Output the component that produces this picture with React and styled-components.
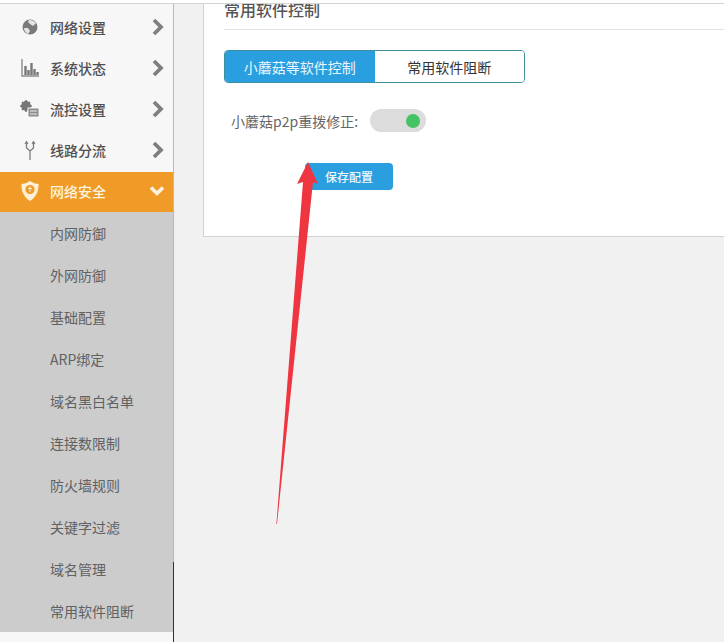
import React from "react";
import styled, { createGlobalStyle } from "styled-components";

const Global = createGlobalStyle`
  html, body { margin: 0; padding: 0; background: #f1f1f1; }
  * { box-sizing: border-box; }
  body { font-family: "Noto Sans CJK SC", "Noto Sans", sans-serif; }
`;

const Page = styled.div`
  position: relative;
  width: 724px;
  height: 642px;
  overflow: hidden;
  display: flex;
  flex-direction: column;
`;
const TopStrip = styled.div`
  height: 4px;
  flex: none;
  background: #fff;
  border-bottom: 1px solid #d4d4d4;
`;
const Body = styled.div`
  flex: 1;
  display: flex;
  min-height: 0;
`;
const Sidebar = styled.nav`
  width: 174px;
  flex: none;
  background: #f7f7f8;
  border-right: 1px solid #b9b9b9;
  position: relative;
  padding-top: 4px;
`;
const Item = styled.div`
  height: ${(p) => (p.$active ? "40px" : "41px")};
  display: flex;
  align-items: center;
  padding: 0 8px 3px 0;
  color: ${(p) => (p.$active ? "#fdf3df" : "#505050")};
  background: ${(p) => (p.$active ? "#f09a27" : "transparent")};
  font-size: 14px;
  font-weight: 500;
`;
const IconSlot = styled.span`
  width: 50px;
  flex: none;
  display: flex;
  justify-content: center;
  padding-left: 10px;
  svg { display: block; }
`;
const ItemLabel = styled.span`
  flex: 1;
`;
const SubList = styled.div`
  background: #cccccd;
`;
const SubItem = styled.div`
  height: 42px;
  display: flex;
  align-items: center;
  padding-left: 50px;
  font-size: 14px;
  color: #616161;
`;
const Edge = styled.div`
  position: absolute;
  right: -1px;
  top: 558px;
  bottom: 0;
  width: 1px;
  background: #333;
`;
const Main = styled.main`
  flex: 1;
  min-width: 0;
  padding-left: 29px;
`;
const Panel = styled.section`
  height: 233px;
  margin-top: 0;
  background: #fff;
  border-left: 1px solid #d2d2d2;
  border-bottom: 1px solid #d2d2d2;
  padding: 0 0 0 20px;
  overflow: hidden;
`;
const Title = styled.h2`
  margin: -9px 0 0;
  height: 35px;
  line-height: 28px;
  font-size: 16px;
  font-weight: 500;
  color: #555;
  border-bottom: 1px solid #e2e2e2;
`;
const Tabs = styled.div`
  margin-top: 20px;
  width: 301px;
  height: 33px;
  display: flex;
  border: 1px solid #3f8f9f;
  border-radius: 4px;
  overflow: hidden;
`;
const Tab = styled.div`
  width: 50%;
  display: flex;
  align-items: center;
  justify-content: center;
  font-size: 14px;
  color: ${(p) => (p.$on ? "#e9f6fd" : "#333")};
  background: ${(p) => (p.$on ? "#2a9fe0" : "#fff")};
`;
const Row = styled.div`
  margin-top: 26px;
  padding-left: 7px;
  display: flex;
  align-items: center;
  gap: 12px;
`;
const RowLabel = styled.span`
  font-size: 14px;
  color: #666;
  width: 127px;
  white-space: nowrap;
`;
const Toggle = styled.div`
  width: 56px;
  height: 23px;
  border-radius: 12px;
  background: #dcdcdc;
  display: flex;
  align-items: center;
  justify-content: flex-end;
  padding-right: 6px;
`;
const Knob = styled.span`
  width: 14px;
  height: 14px;
  border-radius: 50%;
  background: #45c263;
`;
const SaveButton = styled.button`
  display: block;
  margin: 31px 0 0 81px;
  width: 88px;
  height: 27px;
  border: 0;
  border-radius: 4px;
  background: #2a9fe0;
  color: #eef8fd;
  font: 500 12px "Noto Sans CJK SC", sans-serif;
  padding: 0;
`;
const Overlay = styled.svg`
  position: absolute;
  left: 0;
  top: 0;
  pointer-events: none;
`;

const Chevron = () => (
  <svg width="14" height="18" viewBox="0 0 14 18">
    <path d="M3 2 L10 9 L3 16" fill="none" stroke="#7f7f7f" strokeWidth="3.8" />
  </svg>
);
const ChevronDown = () => (
  <svg width="16" height="12" viewBox="0 0 16 12">
    <path d="M2 2.5 L8 8.5 L14 2.5" fill="none" stroke="#fdf3df" strokeWidth="3.6" />
  </svg>
);
const GlobeIcon = () => (
  <svg width="16" height="16" viewBox="0 0 16 16">
    <circle cx="8" cy="8" r="7.5" fill="#7a7a7a" />
    <path d="M7 1 C10 1 12 2 14 4 L11 7 L8 5 L6 3Z M2 9 L6 9 L8 12 L6 15 C4 14 2 12 2 9Z" fill="#e4e4e4" />
  </svg>
);
const ChartIcon = () => (
  <svg width="18" height="18" viewBox="0 0 18 18">
    <path d="M1 0 V17 H18" fill="none" stroke="#8a8a8a" strokeWidth="1.4" />
    <path d="M4.5 16 V7 M7.5 16 V11 M10.5 16 V4 M13.5 16 V10 M16.5 16 V13" stroke="#777" strokeWidth="2.4" />
  </svg>
);
const GearIcon = () => (
  <svg width="20" height="18" viewBox="0 0 20 18">
    <circle cx="6" cy="6" r="3.6" fill="none" stroke="#777" strokeWidth="2.6" />
    <path d="M6 0 V12 M0 6 H12 M2 2 L10 10 M10 2 L2 10" stroke="#777" strokeWidth="1.6" />
    <rect x="8" y="8" width="11" height="9" fill="#8c8c8c" stroke="#f7f7f8" />
    <path d="M10 11 H17 M10 14 H17" stroke="#eee" strokeWidth="1" />
  </svg>
);
const ForkIcon = () => (
  <svg width="14" height="20" viewBox="0 0 14 20">
    <path d="M7 20 V11 L3.5 8 V2 M7 11 L10.5 8 V2" fill="none" stroke="#7d7d7d" strokeWidth="1.3" />
    <path d="M2 4 L3.5 1.5 L5 4 M9 4 L10.5 1.5 L12 4" fill="none" stroke="#7d7d7d" strokeWidth="1.1" />
  </svg>
);
const ShieldIcon = () => (
  <svg width="18" height="20" viewBox="0 0 18 20">
    <path d="M9 0 C12 2 15 3 17.5 3 C18 10 15 16 9 20 C3 16 0 10 .5 3 C3 3 6 2 9 0Z" fill="#fdf0d5" />
    <circle cx="9" cy="8.5" r="4.6" fill="#f09a27" />
    <path d="M9 5.5 V11 M7 7.5 H11" stroke="#fdf0d5" strokeWidth="1" />
  </svg>
);

const menu = [
  ["网络设置", <GlobeIcon />],
  ["系统状态", <ChartIcon />],
  ["流控设置", <GearIcon />],
  ["线路分流", <ForkIcon />],
];
const subs = ["内网防御", "外网防御", "基础配置", "ARP绑定", "域名黑白名单", "连接数限制", "防火墙规则", "关键字过滤", "域名管理", "常用软件阻断"];

export default function App() {
  return (
    <Page>
      <Global />
      <TopStrip />
      <Body>
        <Sidebar>
          {menu.map(([label, icon]) => (
            <Item key={label}>
              <IconSlot>{icon}</IconSlot>
              <ItemLabel>{label}</ItemLabel>
              <Chevron />
            </Item>
          ))}
          <Item $active>
            <IconSlot><ShieldIcon /></IconSlot>
            <ItemLabel>网络安全</ItemLabel>
            <ChevronDown />
          </Item>
          <SubList>
            {subs.map((s) => (
              <SubItem key={s}>{s}</SubItem>
            ))}
          </SubList>
          <Edge />
        </Sidebar>
        <Main>
          <Panel>
            <Title>常用软件控制</Title>
            <Tabs>
              <Tab $on>小蘑菇等软件控制</Tab>
              <Tab>常用软件阻断</Tab>
            </Tabs>
            <Row>
              <RowLabel>小蘑菇p2p重拨修正:</RowLabel>
              <Toggle><Knob /></Toggle>
            </Row>
            <SaveButton>保存配置</SaveButton>
          </Panel>
        </Main>
      </Body>
      <Overlay width="724" height="642" viewBox="0 0 724 642">
        <path d="M308 162 L318 184 L313 182 L277 524 L276.4 524 L303 182 L297 184 Z" fill="#ee3540" />
      </Overlay>
    </Page>
  );
}
